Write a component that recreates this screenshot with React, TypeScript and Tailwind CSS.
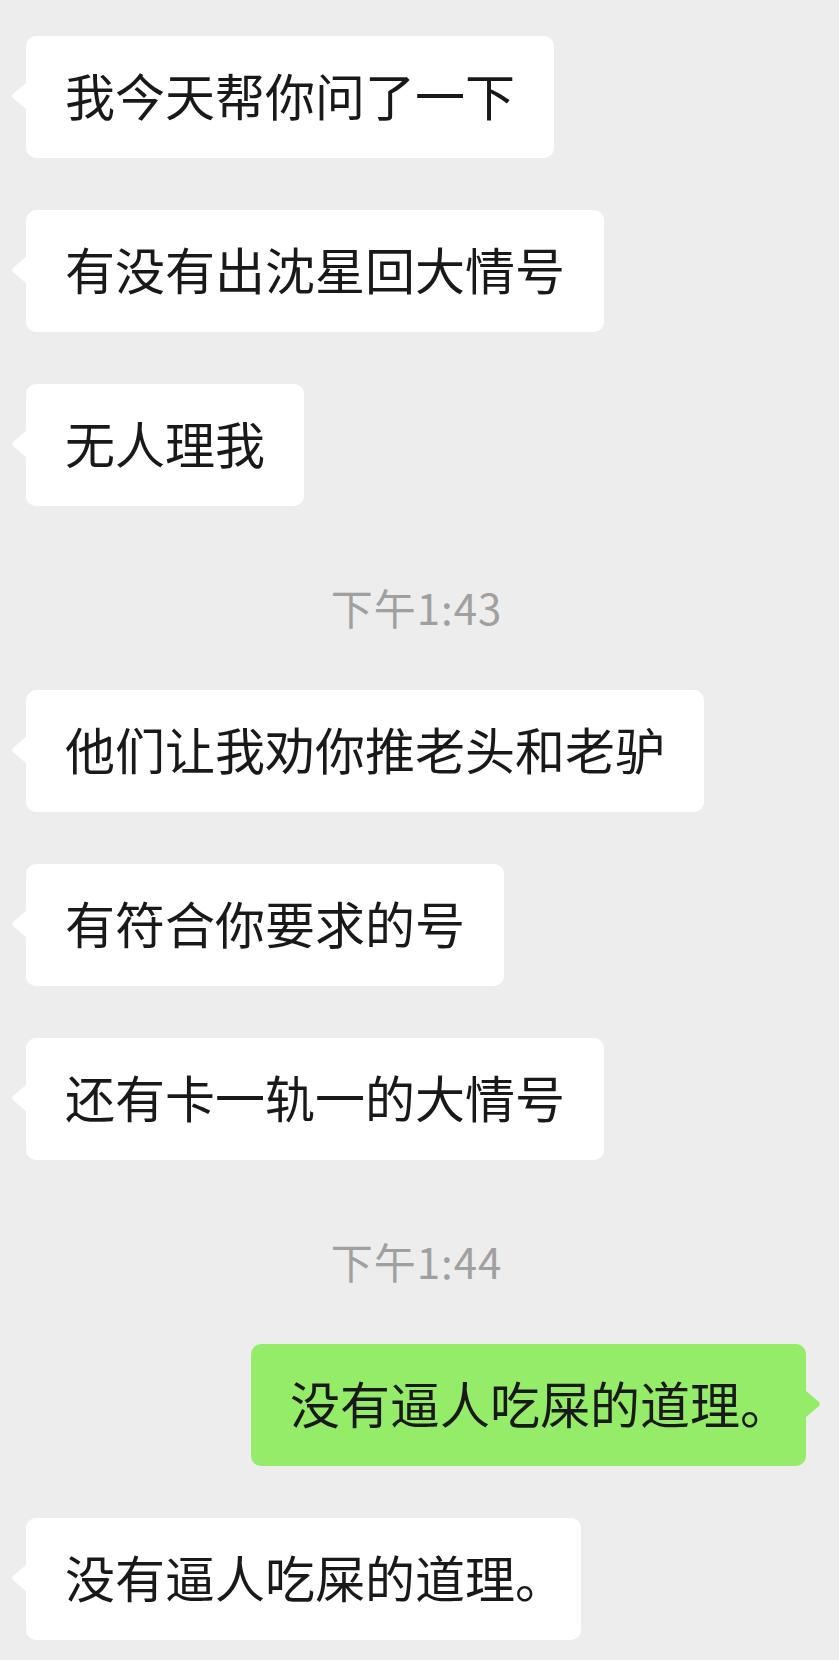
import React from "react";

type TMsg =
    | { kind: "in"; text: string }
    | { kind: "out"; text: string }
    | { kind: "time"; text: string };

const MESSAGES: TMsg[] = [
    { kind: "in", text: "我今天帮你问了一下" },
    { kind: "in", text: "有没有出沈星回大情号" },
    { kind: "in", text: "无人理我" },
    { kind: "time", text: "下午1:43" },
    { kind: "in", text: "他们让我劝你推老头和老驴" },
    { kind: "in", text: "有符合你要求的号" },
    { kind: "in", text: "还有卡一轨一的大情号" },
    { kind: "time", text: "下午1:44" },
    { kind: "out", text: "没有逼人吃屎的道理。" },
    { kind: "in", text: "没有逼人吃屎的道理。" },
];

const FONT = "font-['PingFang_SC','Noto_Sans_CJK_SC',sans-serif]";

// trailing 。 is rendered half width, like iOS does
function BubbleText({ text }: { text: string }) {
    if (text.endsWith("。")) {
        return (
            <>
                {text.slice(0, -1)}
                <span className="[font-feature-settings:'halt'] mr-[2px]">。</span>
            </>
        );
    }
    return <>{text}</>;
}

function Tail({ side, color }: { side: "left" | "right"; color: string }) {
    return (
        <svg
            width="16"
            height="28"
            viewBox="0 0 16 28"
            className={side === "left" ? "absolute -left-[15px] top-[46px]" : "absolute -right-[15px] top-[46px] -scale-x-100"}
        >
            <path d="M16 0 L2.5 11.5 Q0 14 2.5 16.5 L16 28 Z" fill={color} />
        </svg>
    );
}

function Incoming({ text }: { text: string }) {
    return (
        <div className="flex justify-start pl-[26px]">
            <div className="relative bg-white rounded-[10px] px-[39px] pt-[23px] pb-[29px] text-[50px] leading-[70px] text-[#191919] whitespace-nowrap">
                <Tail side="left" color="#ffffff" />
                <BubbleText text={text} />
            </div>
        </div>
    );
}

function Outgoing({ text }: { text: string }) {
    return (
        <div className="flex justify-end pr-[33px]">
            <div className="relative bg-[#95ec69] rounded-[10px] px-[39px] pt-[23px] pb-[29px] text-[50px] leading-[70px] text-[#191919] whitespace-nowrap">
                <Tail side="right" color="#95ec69" />
                <BubbleText text={text} />
            </div>
        </div>
    );
}

function TimeStamp({ text }: { text: string }) {
    return (
        <div className="pt-[23px] pb-[5px] pr-[6px] text-center text-[42px] leading-[52px] tracking-[1px] text-[#a0a0a0]">
            {text}
        </div>
    );
}

export default function App() {
    return (
        <div className={`${FONT} min-h-[1660px] w-full bg-[#ededed] pt-[36px] pb-[20px] flex flex-col gap-[52px]`}>
            {MESSAGES.map((m, i) => {
                if (m.kind === "time") return <TimeStamp key={i} text={m.text} />;
                if (m.kind === "out") return <Outgoing key={i} text={m.text} />;
                return <Incoming key={i} text={m.text} />;
            })}
        </div>
    );
}
